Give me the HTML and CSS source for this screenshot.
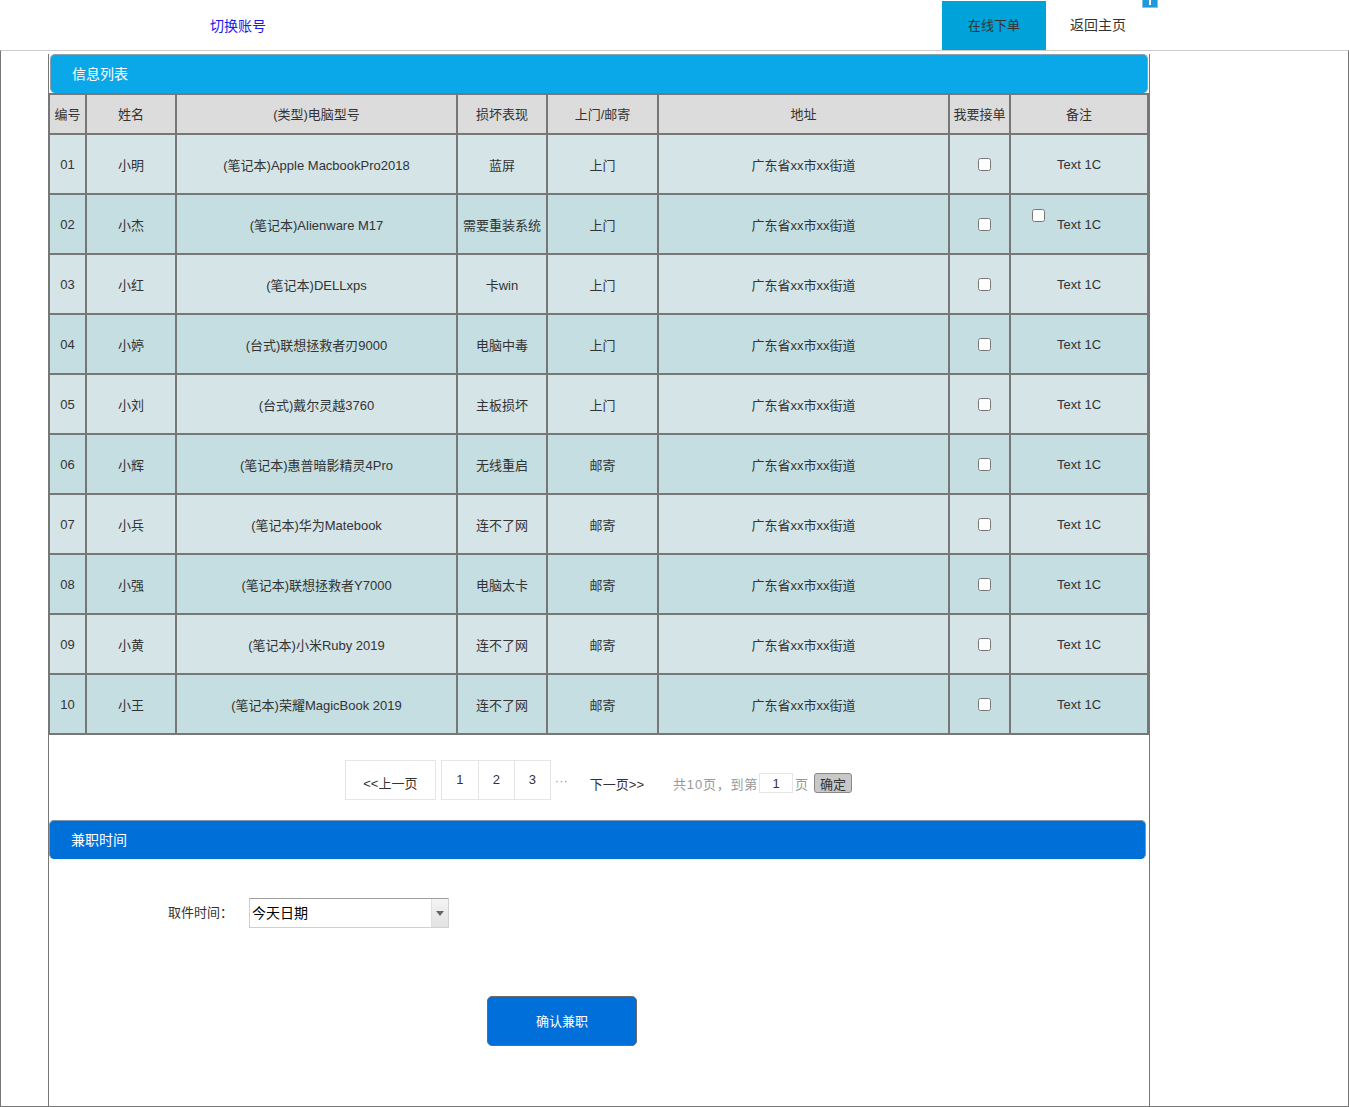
FILE: index.html
```html
<!DOCTYPE html>
<html lang="zh-CN">
<head>
<meta charset="utf-8">
<title>信息列表</title>
<link rel="stylesheet" href="styles.css">
</head>
<body>
<header class="top">
  <a class="switch" href="#">切换账号</a>
  <nav class="nav">
    <a class="tab active" href="#">在线下单</a>
    <a class="tab" href="#">返回主页</a>
  </nav>
  <span class="badge"></span>
</header>
<div class="outer">
  <div class="column">
    <div class="bar bar-info">信息列表</div>
    <table class="list">
      <colgroup>
        <col class="c1"><col class="c2"><col class="c3"><col class="c4"><col class="c5"><col class="c6"><col class="c7"><col class="c8">
      </colgroup>
      <thead>
        <tr><th>编号</th><th>姓名</th><th>(类型)电脑型号</th><th>损坏表现</th><th>上门/邮寄</th><th>地址</th><th>我要接单</th><th>备注</th></tr>
      </thead>
      <tbody>
        <tr><td>01</td><td>小明</td><td>(笔记本)Apple MacbookPro2018</td><td>蓝屏</td><td>上门</td><td>广东省xx市xx街道</td><td><input type="checkbox"></td><td>Text 1C</td></tr>
        <tr><td>02</td><td>小杰</td><td>(笔记本)Alienware M17</td><td>需要重装系统</td><td>上门</td><td>广东省xx市xx街道</td><td><input type="checkbox"></td><td class="note"><input class="float-check" type="checkbox">Text 1C</td></tr>
        <tr><td>03</td><td>小红</td><td>(笔记本)DELLxps</td><td>卡win</td><td>上门</td><td>广东省xx市xx街道</td><td><input type="checkbox"></td><td>Text 1C</td></tr>
        <tr><td>04</td><td>小婷</td><td>(台式)联想拯救者刃9000</td><td>电脑中毒</td><td>上门</td><td>广东省xx市xx街道</td><td><input type="checkbox"></td><td>Text 1C</td></tr>
        <tr><td>05</td><td>小刘</td><td>(台式)戴尔灵越3760</td><td>主板损坏</td><td>上门</td><td>广东省xx市xx街道</td><td><input type="checkbox"></td><td>Text 1C</td></tr>
        <tr><td>06</td><td>小辉</td><td>(笔记本)惠普暗影精灵4Pro</td><td>无线重启</td><td>邮寄</td><td>广东省xx市xx街道</td><td><input type="checkbox"></td><td>Text 1C</td></tr>
        <tr><td>07</td><td>小兵</td><td>(笔记本)华为Matebook</td><td>连不了网</td><td>邮寄</td><td>广东省xx市xx街道</td><td><input type="checkbox"></td><td>Text 1C</td></tr>
        <tr><td>08</td><td>小强</td><td>(笔记本)联想拯救者Y7000</td><td>电脑太卡</td><td>邮寄</td><td>广东省xx市xx街道</td><td><input type="checkbox"></td><td>Text 1C</td></tr>
        <tr><td>09</td><td>小黄</td><td>(笔记本)小米Ruby 2019</td><td>连不了网</td><td>邮寄</td><td>广东省xx市xx街道</td><td><input type="checkbox"></td><td>Text 1C</td></tr>
        <tr><td>10</td><td>小王</td><td>(笔记本)荣耀MagicBook 2019</td><td>连不了网</td><td>邮寄</td><td>广东省xx市xx街道</td><td><input type="checkbox"></td><td>Text 1C</td></tr>
      </tbody>
    </table>
    <div class="pager">
      <a class="prev" href="#">&lt;&lt;上一页</a>
      <div class="pages">
        <a class="page" href="#">1</a>
        <a class="page" href="#">2</a>
        <a class="page" href="#">3</a>
      </div>
      <span class="dots">···</span>
      <a class="next" href="#">下一页&gt;&gt;</a>
      <span class="total">共10页，到第</span>
      <input class="goto" type="text" value="1">
      <span class="unit">页</span>
      <button class="ok" type="button">确定</button>
    </div>
    <div class="bar bar-time">兼职时间</div>
    <div class="form-row">
      <label class="label">取件时间：</label>
      <div class="select-wrap">
        <select class="select"><option>今天日期</option></select>
        <span class="arrow"></span>
      </div>
    </div>
    <button class="confirm" type="button">确认兼职</button>
  </div>
</div>
</body>
</html>
```
FILE: styles.css
```css
* { box-sizing: border-box; }
html, body { margin: 0; padding: 0; }
body {
  font-family: "Liberation Sans", "Noto Sans CJK SC", sans-serif;
  font-size: 13px;
  color: #333;
  background: #fff;
  width: 1349px;
  height: 1107px;
  overflow: hidden;
}
a { text-decoration: none; }

.top {
  position: relative;
  height: 50px;
  display: flex;
  align-items: stretch;
}
.switch {
  margin-left: 210px;
  line-height: 52px;
  font-size: 14px;
  color: #1a1aee;
}
.nav {
  margin-left: auto;
  margin-right: 199px;
  display: flex;
  padding-top: 1px;
}
.tab {
  width: 104px;
  text-align: center;
  line-height: 49px;
  font-size: 14px;
  color: #333;
}
.tab.active {
  background: #00a3d9;
  font-size: 13px;
}
.badge {
  position: absolute;
  left: 1142px;
  top: 0;
  width: 16px;
  height: 8px;
  background: #1f9ad6;
  border: 1px solid #7cc4ea;
  border-top: none;
}
.badge::after {
  content: "";
  position: absolute;
  left: 6px;
  top: 0;
  width: 2px;
  height: 5px;
  background: #fff;
}

.outer {
  height: 1057px;
  border-top: 1px solid #cccccc;
  border-left: 1px solid #777;
  border-right: 1px solid #777;
  border-bottom: 1px solid #777;
}
.column {
  margin-left: 47px;
  width: 1102px;
  height: 100%;
  border-left: 1px solid #777;
  border-right: 1px solid #777;
}

.bar {
  color: #fff;
  font-size: 14px;
  border-radius: 5px;
  display: flex;
  align-items: center;
}
.bar-info {
  margin: 3px 0 0 1px;
  width: 1098px;
  height: 39px;
  padding-left: 21px;
  padding-bottom: 2px;
  background: #0aa8e9;
  border: 1px solid #8aa3b2;
  border-bottom-color: #0aa8e9;
}
.bar-time {
  margin-top: 20px;
  width: 1097px;
  height: 39px;
  padding-left: 21px;
  padding-bottom: 2px;
  background: #0070d9;
  border: 1px solid #7f96ab;
  border-bottom-color: #0070d9;
}

.list {
  margin-left: -1px;
  width: 1099px;
  table-layout: fixed;
  border-collapse: collapse;
  border: 2px solid #777;
}
.c1 { width: 37px; }
.c2 { width: 90px; }
.c3 { width: 281px; }
.c4 { width: 90px; }
.c5 { width: 111px; }
.c6 { width: 291px; }
.c7 { width: 61px; }
.c8 { width: 138px; }
.list th, .list td {
  border: 2px solid #777;
  text-align: center;
  vertical-align: middle;
  padding: 0;
  font-weight: normal;
  font-size: 13px;
  color: #333;
  white-space: nowrap;
}
.list th { padding-bottom: 2px; }
.list thead tr { height: 40px; background: #dcdcdc; }
.list tbody tr { height: 60px; }
.list tbody tr:nth-child(odd) { background: #d4e4e7; }
.list tbody tr:nth-child(even) { background: #c4dee1; }
.list input[type="checkbox"] { margin: 3px 3px 3px 12px; }
.note { position: relative; }
.list .float-check {
  position: absolute;
  left: 9px;
  top: 11px;
  margin: 3px 3px 3px 4px;
}

.pager {
  margin-top: 25px;
  display: flex;
  align-items: center;
  justify-content: center;
  height: 40px;
  padding-right: 1px;
}
.prev {
  width: 91px;
  height: 40px;
  border: 1px solid #e5e5e5;
  display: flex;
  align-items: center;
  justify-content: center;
  padding-top: 5px;
  color: #333;
}
.pages {
  margin-left: 5px;
  display: flex;
  height: 40px;
  border: 1px solid #e5e5e5;
}
.page {
  width: 36px;
  display: flex;
  align-items: center;
  justify-content: center;
  color: #333;
  padding-bottom: 1px;
}
.page + .page { border-left: 1px solid #e5e5e5; }
.dots {
  margin-left: 4px;
  color: #999;
}
.next {
  margin-left: 22px;
  color: #333;
  padding-top: 6px;
}
.total {
  margin-left: 29px;
  color: #999;
  padding-top: 6px;
  letter-spacing: 0.8px;
}
.goto {
  width: 34px;
  height: 20px;
  margin: 6px 0 0 1px;
  border: 1px solid #e5e5e5;
  text-align: center;
  font: 13px "Liberation Sans", sans-serif;
  color: #333;
  padding: 0;
}
.unit {
  margin-left: 2px;
  color: #999;
  padding-top: 6px;
}
.ok {
  margin: 6px 0 0 6px;
  width: 38px;
  height: 20px;
  padding: 0;
  background: #c8c8c8;
  border: 1px solid #888;
  border-radius: 3px;
  font: 13px "Liberation Sans", "Noto Sans CJK SC", sans-serif;
  color: #333;
}

.form-row {
  margin-top: 39px;
  padding-left: 119px;
  display: flex;
  align-items: center;
  height: 30px;
}
.label {
  width: 81px;
  font-size: 13px;
  color: #333;
  padding-bottom: 3px;
}
.select-wrap {
  position: relative;
  width: 200px;
  height: 30px;
}
.select {
  appearance: none;
  -webkit-appearance: none;
  width: 200px;
  height: 30px;
  border: 1px solid #d0d0d0;
  border-top-color: #a0a0a0;
  background: #fff;
  font: 14px "Liberation Sans", "Noto Sans CJK SC", sans-serif;
  color: #000;
  padding: 0 0 0 2px;
  border-radius: 0;
}
.arrow {
  position: absolute;
  right: 1px;
  top: 1px;
  width: 17px;
  height: 28px;
  background: linear-gradient(#f4f4f4, #e2e2e2);
  border-left: 1px solid #e0e0e0;
}
.arrow::after {
  content: "";
  position: absolute;
  left: 4px;
  top: 12px;
  border-left: 4px solid transparent;
  border-right: 4px solid transparent;
  border-top: 5px solid #666;
}

.confirm {
  display: block;
  margin: 68px 0 0 438px;
  width: 150px;
  height: 50px;
  padding-bottom: 2px;
  background: #006fd9;
  border: 1px solid #6a6a6a;
  border-radius: 5px;
  color: #fff;
  font: 13px "Liberation Sans", "Noto Sans CJK SC", sans-serif;
}
```
